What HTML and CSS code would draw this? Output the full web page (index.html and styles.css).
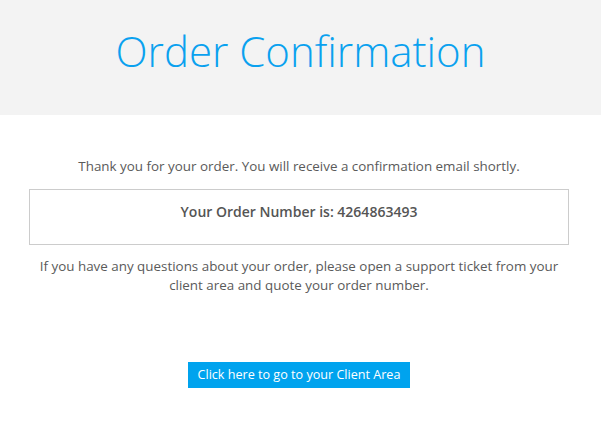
FILE: index.html
```html
<!DOCTYPE html>
<html>
<head>
<meta charset="utf-8">
<link rel="stylesheet" href="styles.css">
</head>
<body>
<header class="hero">
  <h1 class="title">Order Confirmation</h1>
</header>
<main class="content">
  <p class="intro">Thank you for your order. You will receive a confirmation email shortly.</p>
  <div class="order-box">Your Order Number is: 4264863493</div>
  <p class="note">If you have any questions about your order, please open a support ticket from your client area and quote your order number.</p>
  <div class="actions"><a class="btn" href="#">Click here to go to your Client Area</a></div>
</main>
</body>
</html>
```
FILE: styles.css
```css
html, body { margin: 0; padding: 0; background: #fff; }
body { font-family: "Open Sans", "Liberation Sans", sans-serif; color: #5a5a5a; font-size: 13.4px; }
.hero { background: #f3f3f3; height: 115px; display: flex; align-items: center; justify-content: center; }
.title { margin: 0; font-weight: 300; font-size: 42px; color: #0aa1ef; letter-spacing: 0; line-height: 1; position: relative; top: -7px; }
.content { width: 540px; margin-left: 29px; padding-top: 41px; text-align: center; }
.intro { margin: 0 0 13px; line-height: 20px; }
.order-box { border: 1px solid #ccc; padding: 12px 0 22px; font-weight: 600; font-size: 14px; line-height: 20px; color: #555; }
.note { margin: 12px 0 0; line-height: 19px; }
.actions { margin-top: 67px; }
.btn { display: inline-block; background: #00a3ee; color: #fff; text-decoration: none; font-size: 12.6px; line-height: 26px; padding: 0 10px; }
```
